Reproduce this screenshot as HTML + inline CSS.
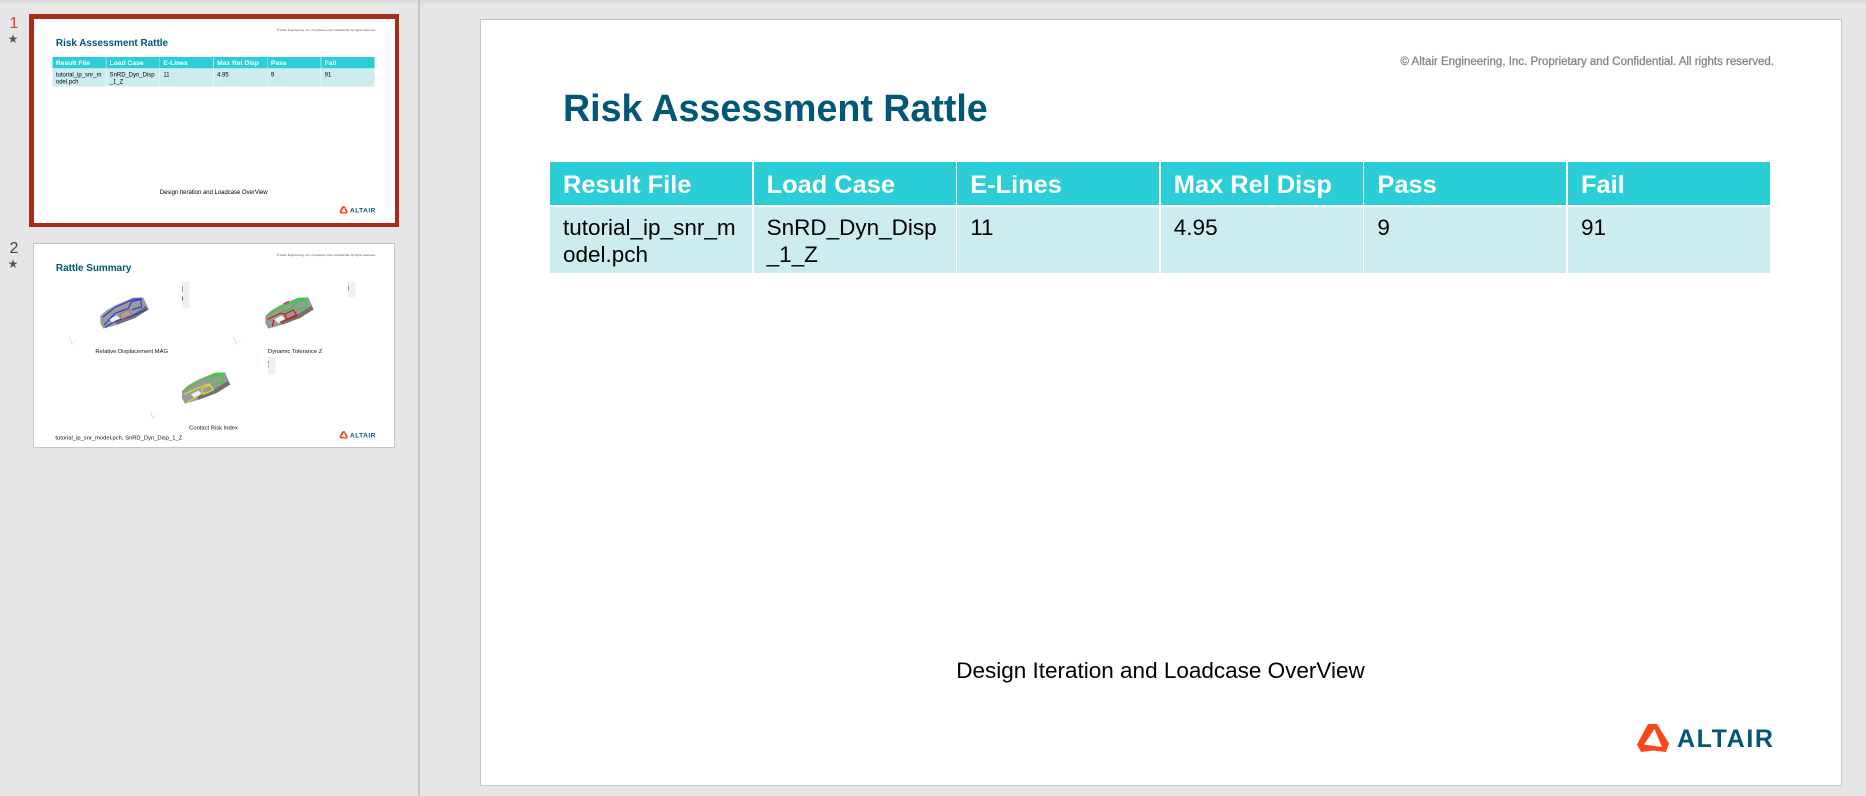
<!DOCTYPE html>
<html lang="en">
<head>
<meta charset="utf-8">
<title>Risk Assessment Rattle</title>
<style>
html,body{margin:0;padding:0;width:1866px;height:796px;overflow:hidden;background:#e6e6e6;font-family:"Liberation Sans",sans-serif}
.top{position:absolute;left:0;top:0;width:1866px;height:5px;background:linear-gradient(#d9d9d9,#e6e6e6)}
.div{position:absolute;left:418px;top:0;width:2px;height:796px;background:#c6c6c6}
.num{position:absolute;width:28px;text-align:center;font-size:16px;line-height:20px;color:#444}
.star{position:absolute;width:26px;text-align:center;font-size:12px;line-height:14px;color:#555;font-family:"DejaVu Sans",sans-serif}
.slide{position:absolute;background:#fff;width:1361px;height:766px;overflow:hidden}
.main{left:480px;top:19px;width:1362px;height:767px;box-shadow:inset 0 0 0 1px #c6c6c6}
.thumb{transform-origin:0 0;transform:scale(.264,.2655);filter:blur(.8px)}
.a{position:absolute;white-space:nowrap}
.copy{right:67px;top:36px;font-size:11.5px;line-height:14px;color:#858585;-webkit-text-stroke:.3px #858585}
.title{left:83px;top:67px;font-size:37.6px;line-height:44px;font-weight:bold;color:#005776}
.cell{position:absolute;box-sizing:border-box;width:202px;padding-left:13px}
.h{top:143px;height:43px;background:#2bced6;color:#fff;font-weight:bold;font-size:25.4px;line-height:47px}
.b{top:188px;height:66px;background:#cdecef;color:#000;font-size:22.5px;line-height:27px;padding-top:7px;white-space:nowrap}
.foot{left:0;width:1361px;text-align:center;top:638px;font-size:22.5px;line-height:28px;color:#000}
.altair{left:1197px;top:705px;font-size:25px;line-height:30px;font-weight:bold;color:#005776;letter-spacing:1.6px}
.logo{position:absolute;left:1157px;top:705px;width:32px;height:28px}
.cap{font-size:22px;line-height:26px;color:#111;transform:translateX(-50%)}
</style>
</head>
<body>
<div class="top"></div>
<div class="div"></div>

<div class="num" style="left:0;top:14px;color:#d9402a">1</div>
<div class="star" style="left:0;top:32px">★</div>
<div class="num" style="left:0;top:239px">2</div>
<div class="star" style="left:0;top:257px">★</div>

<div style="position:absolute;left:29px;top:14px;width:370px;height:213px;background:#a92b19"></div>
<div style="position:absolute;left:33.5px;top:18.5px;width:361px;height:204px;background:#fff"></div>
<div style="position:absolute;left:33px;top:243px;width:362px;height:205px;background:#c6c6c6"></div>
<div style="position:absolute;left:34px;top:244px;width:360px;height:203px;background:#fff"></div>

<div class="slide thumb" style="left:33.5px;top:18.5px">
  <div class="a copy">© Altair Engineering, Inc. Proprietary and Confidential. All rights reserved.</div>
  <div class="a title">Risk Assessment Rattle</div>
  <div class="cell h" style="left:70px">Result File</div>
  <div class="cell h" style="left:273.6px">Load Case</div>
  <div class="cell h" style="left:477.2px">E-Lines</div>
  <div class="cell h" style="left:680.8px">Max Rel Disp</div>
  <div class="cell h" style="left:884.4px">Pass</div>
  <div class="cell h" style="left:1088px">Fail</div>
  <div class="cell b" style="left:70px">tutorial_ip_snr_m<br>odel.pch</div>
  <div class="cell b" style="left:273.6px">SnRD_Dyn_Disp<br>_1_Z</div>
  <div class="cell b" style="left:477.2px">11</div>
  <div class="cell b" style="left:680.8px">4.95</div>
  <div class="cell b" style="left:884.4px">9</div>
  <div class="cell b" style="left:1088px">91</div>
  <div class="a foot">Design Iteration and Loadcase OverView</div>
  <svg class="logo" viewBox="0 0 32 28"><path fill="#f9461c" fill-rule="evenodd" d="M11 0H20L32 19.5 29 28 16 26.5 4 28 0 20.5ZM17.5 5 7 20.5 25 23Z"/></svg>
  <div class="a altair">ALTAIR</div>
</div>

<div class="slide thumb" style="left:33.5px;top:244px;height:760px">
  <div class="a copy">© Altair Engineering, Inc. Proprietary and Confidential. All rights reserved.</div>
  <div class="a title">Rattle Summary</div>
  <div class="a cap" style="left:370px;top:390px">Relative Displacement MAG</div>
  <div class="a cap" style="left:989px;top:390px">Dynamic Tolerance Z</div>
  <div class="a cap" style="left:680px;top:679px">Contact Risk Index</div>
  <div class="a" style="left:81px;top:717px;font-size:22px;line-height:26px;color:#111">tutorial_ip_snr_model.pch, SnRD_Dyn_Disp_1_Z</div>
  <svg class="logo" viewBox="0 0 32 28"><path fill="#f9461c" fill-rule="evenodd" d="M11 0H20L32 19.5 29 28 16 26.5 4 28 0 20.5ZM17.5 5 7 20.5 25 23Z"/></svg>
  <div class="a altair">ALTAIR</div>
</div>

<!-- thumbnail 2 renders, drawn in 3x page coordinates -->
<svg style="position:absolute;left:0;top:230px;filter:blur(.25px)" width="420" height="230" viewBox="0 0 1260 690">
  <defs>
    <path id="body" d="M301 258 318 242 345 226 400 203 430 202 446 238 405 264 352 284 310 296 301 280Z" fill="#9a9a9a"/>
    <path id="hole" d="M328 268 350 256 360 266 340 280Z" fill="#f0f0f0"/>
    <path id="low" d="M446 238 405 264 352 284 345 275 400 252 438 228Z" fill="#707070"/>
  </defs>
  <g>
    <use href="#body"/><use href="#low"/><use href="#hole"/>
    <g fill="none" stroke="#2438e0" stroke-width="3.5">
      <path d="M308 262 345 232 400 208 425 206"/>
      <path d="M312 285 345 250 385 235 395 215 422 208 425 230 395 240"/>
      <path d="M315 292 350 272 395 258 440 238"/>
    </g>
    <path d="M360 252 385 240 395 255 365 268Z" fill="#a8a09c" stroke="#cc5040" stroke-width="2"/>
  </g>
  <g transform="translate(495 0)">
    <use href="#body"/><use href="#low"/><use href="#hole"/>
    <g fill="none" stroke="#10e020" stroke-width="3.5">
      <path d="M308 256 345 232 400 208 425 206"/>
      <path d="M345 248 385 232 395 215 422 208 425 230 395 240"/>
    </g>
    <g fill="none" stroke="#d01818" stroke-width="3.5">
      <path d="M360 252 385 240 395 255 365 268Z"/>
      <path d="M308 268 345 250 360 252"/>
      <path d="M322 290 326 270M345 277 395 258"/>
      <path d="M355 222 372 214"/>
    </g>
  </g>
  <g transform="translate(245 225)">
    <use href="#body"/><use href="#low"/><use href="#hole"/>
    <g fill="none" stroke="#20e020" stroke-width="3.5">
      <path d="M308 256 345 232 400 208 425 206"/>
      <path d="M385 232 395 215 422 208 425 230 395 240"/>
    </g>
    <g fill="none" stroke="#dcdc20" stroke-width="3.5">
      <path d="M360 252 385 240 395 255 365 268Z"/>
      <path d="M308 268 345 250 385 236"/>
      <path d="M315 292 350 272"/>
    </g>
  </g>
  <g>
    <rect x="546" y="155" width="22" height="80" fill="#f1f1f1"/>
    <rect x="546" y="168" width="3" height="18" fill="#e88080"/>
    <rect x="546" y="200" width="3" height="12" fill="#5060d8"/>
    <rect x="1044" y="155" width="22" height="46" fill="#f1f1f1"/>
    <rect x="1044" y="168" width="3" height="6" fill="#40d858"/>
    <rect x="1044" y="175" width="3" height="5" fill="#e05050"/>
    <rect x="804" y="380" width="22" height="54" fill="#f1f1f1"/>
    <rect x="804" y="393" width="3" height="6" fill="#e87040"/>
    <rect x="804" y="400" width="3" height="6" fill="#e8d840"/>
    <rect x="804" y="407" width="3" height="5" fill="#40c858"/>
  </g>
  <g fill="none" stroke-width="1">
    <path d="M208 320 215 340" stroke="#8a90e0"/><path d="M215 340 232 330" stroke="#a0e8a0"/><path d="M215 340 218 345" stroke="#e8a0a0"/>
    <path d="M700 320 708 340" stroke="#8a90e0"/><path d="M708 340 724 330" stroke="#a0e8a0"/><path d="M708 340 711 345" stroke="#e8a0a0"/>
    <path d="M451 545 458 564" stroke="#8a90e0"/><path d="M458 564 474 554" stroke="#a0e8a0"/><path d="M458 564 461 569" stroke="#e8a0a0"/>
  </g>
</svg>

<div class="slide main">
  <div class="a copy" style="right:68px">© Altair Engineering, Inc. Proprietary and Confidential. All rights reserved.</div>
  <div class="a title">Risk Assessment Rattle</div>
  <div class="cell h" style="left:70px">Result File</div>
  <div class="cell h" style="left:273.6px">Load Case</div>
  <div class="cell h" style="left:477.2px">E-Lines</div>
  <div class="cell h" style="left:680.8px">Max Rel Disp</div>
  <div class="cell h" style="left:884.4px">Pass</div>
  <div class="cell h" style="left:1088px">Fail</div>
  <div class="cell b" style="left:70px">tutorial_ip_snr_m<br>odel.pch</div>
  <div class="cell b" style="left:273.6px">SnRD_Dyn_Disp<br>_1_Z</div>
  <div class="cell b" style="left:477.2px">11</div>
  <div class="cell b" style="left:680.8px">4.95</div>
  <div class="cell b" style="left:884.4px">9</div>
  <div class="cell b" style="left:1088px">91</div>
  <div class="a foot">Design Iteration and Loadcase OverView</div>
  <svg class="logo" viewBox="0 0 32 28"><path fill="#f9461c" fill-rule="evenodd" d="M11 0H20L32 19.5 29 28 16 26.5 4 28 0 20.5ZM17.5 5 7 20.5 25 23Z"/></svg>
  <div class="a altair">ALTAIR</div>
</div>
</body>
</html>
